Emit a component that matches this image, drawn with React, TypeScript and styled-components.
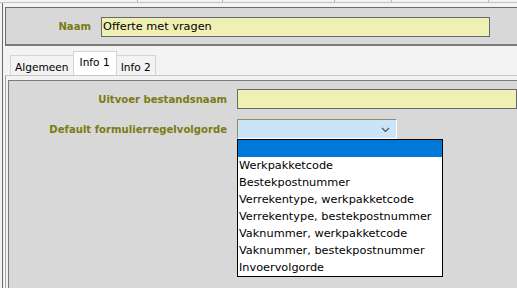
import React from "react";
import styled, { createGlobalStyle } from "styled-components";

const Global = createGlobalStyle`
  html, body { margin: 0; padding: 0; background: #f3f3f3; }
  body { font-family: "DejaVu Sans", Verdana, sans-serif; font-size: 11px; color: #000; overflow: hidden; }
  * { box-sizing: border-box; }
`;

const Page = styled.div`
  width: 517px;
  height: 288px;
  display: flex;
  flex-direction: column;
  overflow: hidden;
`;

const HeaderStrip = styled.div`
  display: flex;
  height: 3px;
  border-bottom: 1px solid #c4c4c4;
  flex: none;
`;

const HeaderCell = styled.div<{ $w: number }>`
  width: ${(p) => p.$w}px;
  border-right: 1px solid #b8b8b8;
  flex: none;
`;

const Frame = styled.div`
  flex: 1;
  margin-left: 2px;
  border-left: 1px solid #6a6a6a;
  padding: 4px 0 0 2px;
  display: flex;
  flex-direction: column;
`;

const NamePanel = styled.div`
  height: 39px;
  background: #d8d8d8;
  border-top: 1px solid #6a6a6a;
  border-left: 1px solid #6a6a6a;
  border-bottom: 2px solid #7a7a7a;
  display: grid;
  grid-template-columns: 85px 389px;
  column-gap: 10px;
  align-items: center;
  padding-top: 1px;
`;

const Label = styled.label`
  font-weight: bold;
  color: #7b7b14;
  text-align: right;
  white-space: nowrap;
  font-size: 10.1px;
`;

const TextInput = styled.div<{ $bg: string }>`
  height: 20px;
  background: ${(p) => p.$bg};
  border: 1px solid #646a70;
  padding: 0 1px;
  font-size: 11.3px;
  line-height: 18px;
  white-space: nowrap;
`;

const TabBar = styled.div`
  display: flex;
  align-items: flex-end;
  padding: 6px 0 0 5px;
  height: 29px;
  flex: none;
`;

const Tab = styled.div<{ $active?: boolean }>`
  height: ${(p) => (p.$active ? 24 : 20)}px;
  padding: 0 ${(p) => (p.$active ? 6 : 4)}px;
  background: ${(p) => (p.$active ? "#ffffff" : "#f3f3f3")};
  border: 1px solid #d4d4d4;
  border-bottom: none;
  margin-right: -1px;
  font-size: 10.6px;
  display: flex;
  align-items: ${(p) => (p.$active ? "flex-start" : "center")};
  padding-top: ${(p) => (p.$active ? 4 : 2)}px;
  position: relative;
  z-index: ${(p) => (p.$active ? 1 : 0)};
`;

const Content = styled.div`
  flex: 1;
  border-top: 1px solid #c8c8c8;
  border-left: 1px solid #a8a8a8;
  padding: 4px 0 0 2px;
  display: flex;
  flex-direction: column;
`;

const Inner = styled.div`
  flex: 1;
  background: #d8d8d8;
  border-top: 1px solid #7a7a7a;
  border-left: 1px solid #7a7a7a;
  display: grid;
  grid-template-columns: 218px 1fr;
  grid-auto-rows: 20px;
  column-gap: 10px;
  row-gap: 10px;
  align-items: center;
  padding-top: 8px;
  align-content: start;
`;

const SelectWrap = styled.div`
  position: relative;
  width: 160px;
  height: 20px;
`;

const Select = styled.div`
  height: 20px;
  background: #cce4f7;
  border-top: 1px solid #8f8f6e;
  border-left: 1px solid #8f8f6e;
  border-right: 1px solid #ffffff;
  border-bottom: 1px solid #ffffff;
  display: flex;
  align-items: center;
  justify-content: flex-end;
  padding-right: 6px;
  padding-top: 2px;
`;

const List = styled.div`
  position: absolute;
  top: 20px;
  left: 0;
  width: 206px;
  background: #ffffff;
  border: 1px solid #000000;
  z-index: 5;
`;

const Option = styled.div<{ $selected?: boolean }>`
  height: 17px;
  line-height: 17px;
  padding-left: 1px;
  font-size: 11.3px;
  white-space: nowrap;
  background: ${(p) => (p.$selected ? "#0078d7" : "#ffffff")};
  color: ${(p) => (p.$selected ? "#ffffff" : "#000000")};
`;

const options = [
  "",
  "Werkpakketcode",
  "Bestekpostnummer",
  "Verrekentype, werkpakketcode",
  "Verrekentype, bestekpostnummer",
  "Vaknummer, werkpakketcode",
  "Vaknummer, bestekpostnummer",
  "Invoervolgorde",
];

export default function App() {
  return (
    <Page>
      <Global />
      <HeaderStrip>
        <HeaderCell $w={138} />
        <HeaderCell $w={85} />
        <HeaderCell $w={112} />
        <HeaderCell $w={57} />
        <HeaderCell $w={97} />
      </HeaderStrip>
      <Frame>
        <NamePanel>
          <Label>Naam</Label>
          <TextInput $bg="#f0f0b4">Offerte met vragen</TextInput>
        </NamePanel>
        <TabBar>
          <Tab>Algemeen</Tab>
          <Tab $active>Info 1</Tab>
          <Tab>Info 2</Tab>
        </TabBar>
        <Content>
          <Inner>
            <Label>Uitvoer bestandsnaam</Label>
            <TextInput $bg="#f0f0b4" />
            <Label>Default formulierregelvolgorde</Label>
            <SelectWrap>
              <Select>
                <svg width="9" height="6" viewBox="0 0 9 6">
                  <path d="M1 1 L4.5 4.5 L8 1" fill="none" stroke="#505050" strokeWidth="1.2" />
                </svg>
              </Select>
              <List>
                {options.map((o, i) => (
                  <Option key={i} $selected={i === 0}>
                    {o || "\u00a0"}
                  </Option>
                ))}
              </List>
            </SelectWrap>
          </Inner>
        </Content>
      </Frame>
    </Page>
  );
}
